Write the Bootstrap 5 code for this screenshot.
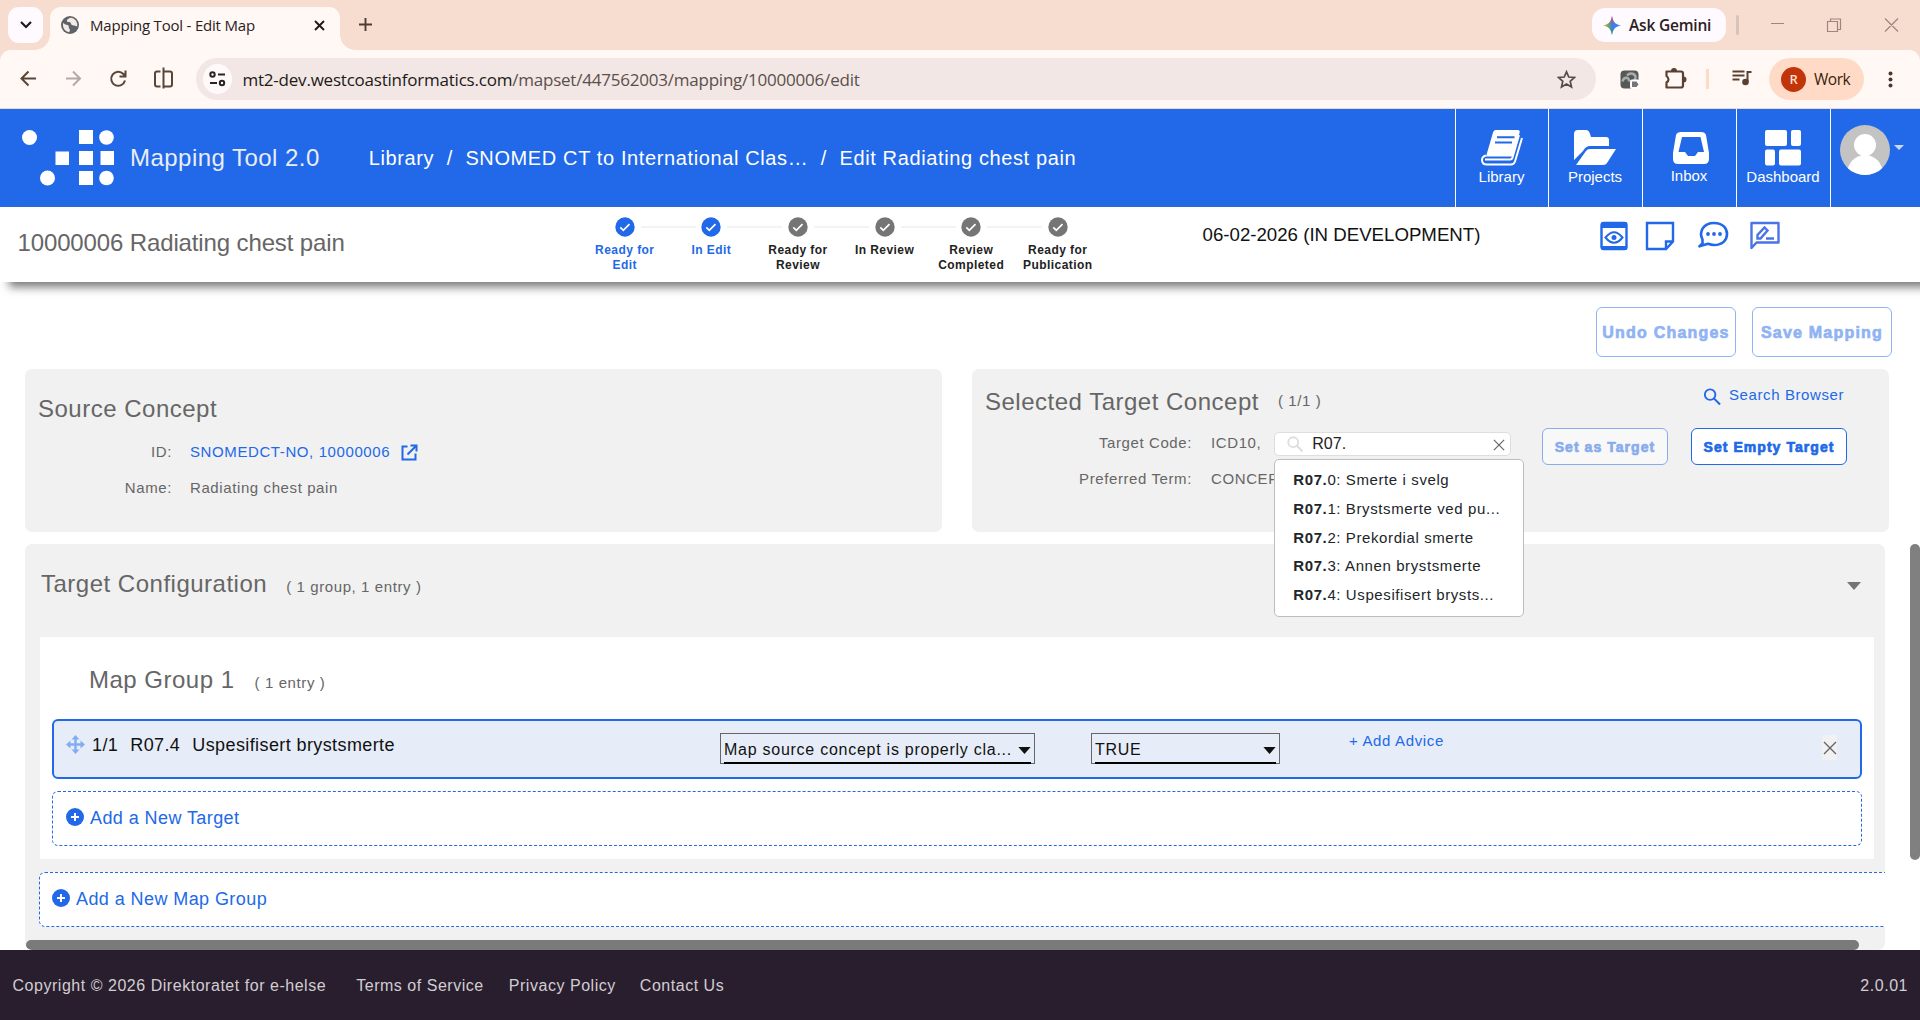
<!DOCTYPE html>
<html lang="en">
<head>
<meta charset="utf-8">
<title>Mapping Tool - Edit Map</title>
<link href="https://cdn.jsdelivr.net/npm/bootstrap@5.3.0/dist/css/bootstrap.min.css" rel="stylesheet">
<style>
:root{--mt-blue:#2169e8;--mt-grey:#666;--mt-panel:#f1f1f1}
body{width:1920px;height:1020px;overflow:hidden;background:#fff;font-family:"Liberation Sans",Arial,sans-serif;font-size:15px;letter-spacing:.6px;color:var(--mt-grey);line-height:20px}
svg{display:block;flex:none}
a{text-decoration:none}
a.mt-link,a.mt-link:not([href]){color:var(--mt-blue)}
/* browser frame */
.ui-font{font-family:"Open Sans","Noto Sans",sans-serif;letter-spacing:0;color:#2b211c}
.tabstrip{height:50px;background:#f7ddd0;padding-left:8px}
.tab-menu{width:35px;height:36px;margin-top:7px;border-radius:11px;background:#fffaff}
.browser-tab{position:relative;width:290px;height:43px;margin:7px 0 0 7px;padding:0 15px 7px 11px;border-radius:11px 11px 0 0;background:#fff8f5}
.browser-tab::before,.browser-tab::after{content:"";position:absolute;bottom:0;width:15px;height:15px}
.browser-tab::before{left:-15px;background:radial-gradient(circle at 0 0,transparent 14.5px,#fff8f5 15px)}
.browser-tab::after{right:-15px;background:radial-gradient(circle at 100% 0,transparent 14.5px,#fff8f5 15px)}
.tab-title{font-size:15px;letter-spacing:-.2px;margin-left:11px}
.new-tab{margin:18px 0 0 19px}
.gemini{width:134px;height:34px;border-radius:13px;background:#fffaff;font-size:15.5px;font-weight:600;letter-spacing:-.2px;padding-left:11px}
.win-sep{width:3px;height:20px;background:#d6c3bb;border-radius:2px;margin:15px 32px 0 10px}
.toolbar-row{height:59px;background:#fff8f5;border-bottom:1px solid #e6d9d3;border-radius:11px 11px 0 0}
.tool-wrap{background:#f7ddd0}
.address{width:1400px;height:42px;border-radius:21px;background:#f2e7e5;padding:0 20px 0 7px}
.site-info{width:29px;height:30px;border-radius:50%;background:#fffaf9}
.url{font-size:17px;letter-spacing:-.22px;color:#5b4f4b;margin:1px 0 0 10.5px}
.url b{font-weight:400;color:#211a17}
.profile{width:95px;height:42px;border-radius:21px;background:#ffdbc7;padding-left:12px;font-size:15.5px;letter-spacing:-.5px;color:#3a1d0c}
.profile-dot{width:25px;height:25px;border-radius:50%;background:#c1350a;color:#ffdfd0;font-size:13px;font-weight:600}
/* application header */
.app-head{height:98px;background:var(--mt-blue);color:#fff}
.brand-name{font-size:24px;letter-spacing:.46px;color:#e9edf5}
.crumbs{font-size:20px;letter-spacing:.62px;white-space:nowrap;gap:12.5px;margin-left:49px}
.head-item{width:94px;height:98px;border-left:1px solid #fff;color:#fff;font-size:15px;letter-spacing:0;padding:21px 1px 0 0}
.head-item:first-child{width:93px}
.head-item svg{height:36px}
.head-item span{line-height:18px;margin-top:2px}
.head-item span.inbox-text{margin-top:1px}
.user-menu{width:90px;height:98px;border-left:1px solid #fff;padding:16px 0 0 9px;color:#c9d9f7}
.user-caret{margin:20px 0 0 4px}
/* status bar */
.status-bar{position:relative;z-index:2;height:75px;background:#fff;box-shadow:9px 5px 9px #777}
.concept-title{font-size:24px;letter-spacing:-.13px;width:581.5px;padding-left:17.5px;line-height:30px;padding-top:21px}
.step{width:86.6px;font-size:12px;font-weight:700;letter-spacing:.45px;line-height:15px;color:#222;position:relative;padding-top:10px}
.step svg{margin:0 auto 6px}
.step.done{color:var(--mt-blue)}
.step+.step::before{content:"";position:absolute;top:19px;left:-27.3px;width:55px;height:2px;background:#f3f3f3}
.release{font-size:18.67px;letter-spacing:0;color:#111;margin:18px 0 0 101.5px}
.bar-tools{margin:13px 140px 0 0}
/* content */
.content-area{height:668px;padding:25px 0 0 25px}
.mt-btn{border:1px solid var(--mt-blue);border-radius:6px;background:#fff;color:var(--mt-blue);font-weight:700;-webkit-text-stroke:.7px currentColor;padding:0;line-height:20px}
.mt-btn.is-off{opacity:.5}
.btn-lg2{width:140px;height:50px;font-size:16px;letter-spacing:1.2px;white-space:nowrap;padding-top:1px}
.btn-sm2{height:37px;font-size:14px;letter-spacing:1.05px}
.panel{background:var(--mt-panel);border-radius:7px}
.concept-panel{width:917px;height:163px}
.panel-title{font-size:24px;letter-spacing:.5px;line-height:30px}
.field-label{text-align:right;flex:none;margin-right:18px}
.src-label{width:134px}
.tgt-label{width:207px;margin-right:19px}
.code-box{position:relative;width:237px;height:24px;margin:2px 0 0 13px;border:1px solid #dedede;border-radius:5px;background:#fff}
.code-box input{border:0;outline:0;background:none;width:172px;padding:0;font-size:16px;letter-spacing:0;line-height:20px;color:#222;margin:0 9px;height:20px}
.suggest{position:absolute;z-index:5;left:-1px;top:26px;width:250px;height:158px;padding:6px 0 0 18px;border:1px solid #bdbdbd;border-radius:5px;background:#fff;color:#212529;line-height:28.75px;white-space:nowrap}
.config{width:1860px;height:406px;overflow:hidden;margin-top:12px}
.config-head{padding:25px 24px 0 16px}
.group-box{margin:38px 11px 0 15px;height:222px;background:#fff;padding:28px 12px 0}
.group-head{margin-left:37px;height:54px}
.entry{height:60px;border:2px solid var(--mt-blue);border-radius:6px;background:#e7edf8;color:#111;font-size:18px;letter-spacing:.4px}
.entry-text{width:636px;margin-top:14px;gap:12px;padding-left:7px}
.pick{height:31px;border:1px solid #666;padding:1px 3px 0;font-size:16px;letter-spacing:.74px;margin-top:12px}
.pick>div{height:29px;border-bottom:2px solid #000;padding-top:2px}
.pick svg{margin-top:1px}
.advice{font-size:15px;letter-spacing:.65px;margin:10px 0 0 69px}
.dashed{height:55px;border:1px dashed var(--mt-blue);border-radius:6px;background:#fff;color:var(--mt-blue);font-size:18px;letter-spacing:.42px;gap:6px}
.hbar{width:1833px;height:10px;border-radius:5px;background:#7a7a7a;margin:13px 0 0 1px}
.vbar{position:absolute;left:1910px;top:262px;width:10px;height:316px;border-radius:5px;background:#808080}
.remove{width:15px;height:25px;background:#f1f1f1;margin:14px 23px 0 0}
.app-foot{height:70px;background:#291e2d;color:#d2cdd3;font-size:16px;letter-spacing:.53px;padding:1px 12px 0 12.5px}
</style>
</head>
<body>
<svg width="0" height="0" class="position-absolute">
<defs>
<symbol id="chk" viewBox="0 0 20 20"><circle cx="10" cy="10" r="9.700" fill="currentColor"/><path d="M5.300 10.400l3 3 6.200-6.300" fill="none" stroke="#fff" stroke-width="1.700"/></symbol>
<symbol id="plus" viewBox="0 0 18 18"><circle cx="9" cy="9" r="9" fill="currentColor"/><path d="M9 5v8M5 9h8" stroke="#fff" stroke-width="2"/></symbol>
<symbol id="times" viewBox="0 0 14 14"><path d="M1 1l12 12M13 1L1 13" stroke="currentColor" stroke-width="1.400" fill="none"/></symbol>
<symbol id="lens" viewBox="0 0 18 18"><circle cx="7" cy="7" r="5.600" fill="none" stroke="currentColor" stroke-width="2"/><path d="M11 11l6.500 6.500" stroke="currentColor" stroke-width="2.200"/></symbol>
<symbol id="caret" viewBox="0 0 14 8"><path d="M0 0h14L7 8z" fill="currentColor"/></symbol>
</defs>
</svg>

<div class="tabstrip ui-font d-flex align-items-start">
  <div class="tab-menu d-flex align-items-center justify-content-center"><svg width="14" height="10"><path d="M2 2l5 5 5-5" fill="none" stroke="#1d1b1a" stroke-width="2.200"/></svg></div>
  <div class="browser-tab d-flex align-items-center">
    <svg width="18" height="18" viewBox="0 0 18 18"><circle cx="9" cy="9" r="9" fill="#5f6368"/><path d="M2 7q2.500 2 4.500 2 1.800.3 1.300 2-.6 1.200.8 1.800.8 2-.4 3.400C4 15.500 1.500 12 2 7zM9.500 1.800q-3.500 1-3.700 2.700 0 1.500 1.800 1.500 2-.3 2.200 1.200 0 1.600 1.800 2 2.800.2 4.600 1.300c.8-3.700-1.700-8.300-6.700-8.700z" fill="#f3ebe8"/></svg>
    <span class="tab-title">Mapping Tool - Edit Map</span>
    <svg class="ms-auto" width="11" height="11"><path d="M1 1l9 9M10 1l-9 9" stroke="#1d1b1a" stroke-width="1.900"/></svg>
  </div>
  <svg class="new-tab" width="13" height="13"><path d="M6.500 0v13M0 6.500h13" stroke="#4d3c33" stroke-width="1.900"/></svg>
  <div class="gemini ms-auto mt-2 d-flex align-items-center gap-2"><svg width="18" height="19" viewBox="0 0 18 19"><defs><linearGradient id="gem"><stop offset="0" stop-color="#f4b72c"/><stop offset=".3" stop-color="#7ca45b"/><stop offset=".5" stop-color="#3b7de9"/><stop offset="1" stop-color="#4387f7"/></linearGradient><linearGradient id="gem2" x2="0" y2="1"><stop offset="0" stop-color="#f04438"/><stop offset=".45" stop-color="#f04438" stop-opacity="0"/><stop offset=".6" stop-color="#20a558" stop-opacity="0"/><stop offset="1" stop-color="#20a558"/></linearGradient></defs><path d="M9 0c1 5.500 3 8.500 9 9.500-6 1-8 4-9 9.500-1-5.500-3-8.500-9-9.500 6-1 8-4 9-9.500z" fill="url(#gem)"/><path d="M9 0c1 5.500 3 8.500 9 9.500-6 1-8 4-9 9.500-1-5.500-3-8.500-9-9.500 6-1 8-4 9-9.500z" fill="url(#gem2)"/></svg><span>Ask Gemini</span></div>
  <div class="win-sep"></div>
  <svg class="mt-3" width="149" height="16"><g transform="translate(0 2)" fill="none" stroke="#9b877e" stroke-width="1.200"><path d="M0 5.500h13M56.500 3.500h10v10h-10zM59.500 3V1h10v10.500h-2.500M114 .5l13 13M127 .5l-13 13"/></g></svg>
</div>

<div class="tool-wrap"><div class="toolbar-row ui-font d-flex align-items-center">
  <svg width="196" height="58" fill="none" stroke="#5a4636" stroke-width="2">
    <path d="M36 28.500H22M28.500 21.500l-7 7 7 7"/>
    <path d="M66 28.500h14M73 21.500l7 7-7 7" stroke="#b5a9a3"/>
    <path d="M125 30.500a7 7 0 1 1-1.600-6.500l1.600 1.700M125.500 20.500v6h-6"/>
    <path d="M160.500 21.500h-3.500a2 2 0 0 0-2 2v11a2 2 0 0 0 2 2h3.500M163.500 17.500v21M163.500 21.500h6.500a2 2 0 0 1 2 2v11a2 2 0 0 1-2 2h-6.500"/>
  </svg>
  <div class="address d-flex align-items-center">
    <div class="site-info d-flex align-items-center justify-content-center"><svg width="17" height="16" fill="none" stroke="#2b2320" stroke-width="2"><circle cx="3.500" cy="3.500" r="2.200"/><path d="M9 3.500h7M1 12h7"/><circle cx="13" cy="12" r="2.200"/></svg></div>
    <span class="url"><b>mt2-dev.westcoastinformatics.com</b>/mapset/447562003/mapping/10000006/edit</span>
    <svg class="ms-auto" width="19" height="19" viewBox="0 0 19 19"><path d="M9.500 1.800l2.300 5.200 5.700.5-4.300 3.800 1.300 5.600-5-3-5 3 1.300-5.600L1.500 7.500 7.200 7z" fill="none" stroke="#5a4a44" stroke-width="1.700"/></svg>
  </div>
  <svg width="173" height="58">
    <rect x="24.500" y="20.500" width="18" height="18" rx="4" fill="#555958"/><path d="M26.500 31.500c1-5 7-5 6.500 0M31 25.500c3-3.500 9-2 8.500 2.500-.5 3-3 4-5 3" fill="none" stroke="#a9acaa" stroke-width="2.500"/><rect x="34" y="29.500" width="10" height="9.500" rx="2" fill="#fff"/><path d="M36 31.500h4.500l2 3-2 2.500H36z" fill="#777"/>
    <path d="M70.500 21.500h14.500q2 0 2 2v12q0 2-2 2H70.500v-5q4-3 0-6.500z" fill="none" stroke="#5a4030" stroke-width="2.200" stroke-linejoin="round"/><path d="M75 21a3 3 0 0 1 6 0zM87.500 26.500a3 3 0 0 1 0 6z" fill="#5a4030"/>
    <rect x="110" y="19" width="3" height="20" fill="#ffdac5"/>
    <path d="M136.500 21.500h12M136.500 25.500h12M136.500 29.500h7M151.500 32V22h4" stroke="#5a4030" stroke-width="2" fill="none"/><circle cx="149.500" cy="32" r="3.300" fill="#5a4030"/>
  </svg>
  <div class="profile d-flex align-items-center"><span class="profile-dot d-flex align-items-center justify-content-center me-2">R</span>Work</div>
  <svg class="ms-4" width="5" height="17" fill="#4a382e"><circle cx="2.500" cy="2.500" r="2"/><circle cx="2.500" cy="8.500" r="2"/><circle cx="2.500" cy="14.500" r="2"/></svg>
</div></div>

<header class="app-head d-flex align-items-center">
  <svg width="130" height="98" fill="#fff"><circle cx="29.500" cy="28.500" r="7.500"/><rect x="79" y="21" width="14" height="14"/><circle cx="106.500" cy="28.500" r="7.300"/><rect x="55.500" y="42.500" width="13.500" height="13.500"/><rect x="79" y="42" width="14" height="14"/><rect x="100.500" y="42" width="13.500" height="14"/><circle cx="47.500" cy="69" r="7.500"/><rect x="79" y="62" width="14" height="14"/><circle cx="106.500" cy="69" r="7.300"/></svg>
  <span class="brand-name">Mapping Tool 2.0</span>
  <nav class="crumbs d-flex"><span>Library</span><span>/</span><span>SNOMED CT to International Clas…</span><span>/</span><span>Edit Radiating chest pain</span></nav>
  <nav class="d-flex ms-auto">
    <a class="head-item d-flex flex-column align-items-center"><svg width="42" viewBox="0 0 42 36" fill="none"><path d="M14.500 0h22q3 0 2 3l-7 23.500H5L12 2.500Q12.700 0 14.500 0z" fill="#fff"/><path d="M16 7.200h17.500M14 12.600h17" stroke="var(--mt-blue)" stroke-width="2"/><path d="M5 25.500q-4 1-4 4.500 0 4.500 5 4.500h24q3 0 4-3L41 8M4 29.500h25q2 0 2.500-2L38 5" stroke="#fff" stroke-width="2"/></svg><span>Library</span></a>
    <a class="head-item d-flex flex-column align-items-center"><svg width="42" viewBox="0 0 42 36" fill="#fff"><path d="M0 4q0-4 4-4h8q3 0 4 4l1 3h15q3 0 3 3v6H16q-4 0-7 5L0 30z"/><path d="M12 21q1-2 4-2h26L33 33q-1 2-4 2H2z"/></svg><span>Projects</span></a>
    <a class="head-item d-flex flex-column align-items-center"><svg class="ms-1" width="38" viewBox="0 0 38 36"><path d="M9 2h20q4 0 5 3l3 18v6q0 5-5 5H6q-5 0-5-5v-6L4 5q1-3 5-3zm1 5L6.500 22H13l3 4h7l3-4h6L28.500 7z" fill="#fff" fill-rule="evenodd"/></svg><span class="inbox-text">Inbox</span></a>
    <a class="head-item d-flex flex-column align-items-center"><svg width="36" viewBox="0 0 36 36" fill="#fff"><rect y="0" width="22" height="16" rx="2"/><rect x="26" width="10" height="16" rx="2"/><rect y="19.500" width="10" height="16" rx="2"/><rect x="14" y="19.500" width="22" height="16" rx="2"/></svg><span>Dashboard</span></a>
    <a class="user-menu d-flex"><svg width="50" height="50"><defs><clipPath id="av"><circle cx="25" cy="25" r="25"/></clipPath></defs><g clip-path="url(#av)"><rect width="50" height="50" fill="#c3c3c3"/><g fill="#fff"><circle cx="25" cy="20" r="11"/><ellipse cx="25" cy="49" rx="18" ry="19"/></g></g></svg><svg class="user-caret" width="10" height="5" viewBox="0 0 10 5"><path d="M0 0h10L5 5z" fill="#c9d9f7"/></svg></a>
  </nav>
</header>

<section class="status-bar d-flex align-items-start">
  <div class="concept-title">10000006 Radiating chest pain</div>
  <div class="d-flex text-center">
    <div class="step done"><svg width="20" height="20"><use href="#chk"/></svg>Ready for<br>Edit</div>
    <div class="step done"><svg width="20" height="20"><use href="#chk"/></svg>In Edit</div>
    <div class="step"><svg width="20" height="20" color="#757575"><use href="#chk"/></svg>Ready for<br>Review</div>
    <div class="step"><svg width="20" height="20" color="#757575"><use href="#chk"/></svg>In Review</div>
    <div class="step"><svg width="20" height="20" color="#757575"><use href="#chk"/></svg>Review<br>Completed</div>
    <div class="step"><svg width="20" height="20" color="#757575"><use href="#chk"/></svg>Ready for<br>Publication</div>
  </div>
  <div class="release">06-02-2026 (IN DEVELOPMENT)</div>
  <svg class="bar-tools ms-auto" width="181" height="31" fill="none" stroke="#2169e8" stroke-width="2.400">
    <rect x="2.500" y="3" width="25" height="26" rx="2"/><path d="M2 2.500h26V8H2zM2 26h26v3.500H2z" fill="#2169e8" stroke="none"/><path d="M6.500 17.500q8.500-10.500 17 0-8.500 10.500-17 0z" stroke-width="2"/><circle cx="15" cy="17.500" r="2.500" fill="#2169e8" stroke="none"/>
    <path d="M48 3h26v18.500l-7 7.500h-19zM67 29v-7.500h7"/>
    <path d="M103.500 23.500v-4c-4-8 1-16.500 11.500-16.500 9 0 13 5.500 13 11s-4 11-13 11c-2 0-4-.5-6-1.200l-8.500 2.500z" stroke-width="2.600" stroke-linejoin="round"/><g fill="#2169e8" stroke="none"><circle cx="109" cy="14" r="1.900"/><circle cx="115" cy="14" r="1.900"/><circle cx="121" cy="14" r="1.900"/></g>
    <g stroke="#4a73e8"><path d="M152.500 28V3h27v19.500h-22z" stroke-linejoin="round"/><path d="M158.500 18.500v-3.500l7-7.500 3 3-7 8zM167 18.500h8"/></g>
  </svg>
</section>

<main class="content-area position-relative">
  <div class="vbar"></div>
  <div class="d-flex justify-content-end gap-3" style="margin-right:28px">
    <button class="mt-btn btn-lg2 is-off">Undo Changes</button>
    <button class="mt-btn btn-lg2 is-off">Save Mapping</button>
  </div>
  <div class="d-flex" style="margin-top:12px;gap:30px">
    <section class="panel concept-panel" style="padding:25px 13px 0">
      <div class="panel-title">Source Concept</div>
      <div class="d-flex align-items-center" style="margin-top:18px"><span class="field-label src-label">ID:</span><a class="mt-link">SNOMEDCT-NO, 10000006</a>
        <svg style="margin-left:11px" width="17" height="17" fill="none" stroke="#2169e8" stroke-width="2"><path d="M6.500 2.500H1.500v13h13v-6M9.500 1.500h6v6M15.500 1.500L6.500 10.500"/></svg></div>
      <div class="d-flex" style="margin-top:16px"><span class="field-label src-label">Name:</span><span>Radiating chest pain</span></div>
    </section>
    <section class="panel concept-panel d-flex">
      <div style="width:570px;padding:18px 0 0 13px">
        <div class="d-flex"><span class="panel-title">Selected Target Concept</span><span style="margin:4px 0 0 19px">( 1/1 )</span></div>
        <div class="d-flex align-items-center" style="margin-top:14px;height:24px"><span class="field-label tgt-label">Target Code:</span><span>ICD10,</span>
          <div class="code-box d-flex align-items-center"><svg class="ms-2 ps-1" color="#ddd" width="20" height="16"><use href="#lens"/></svg><input value="R07."><svg style="margin-top:2px" color="#666" width="12" height="12"><use href="#times"/></svg>
            <div class="suggest"><div><b>R07.</b>0: Smerte i svelg</div><div><b>R07.</b>1: Brystsmerte ved pu...</div><div><b>R07.</b>2: Prekordial smerte</div><div><b>R07.</b>3: Annen brystsmerte</div><div><b>R07.</b>4: Uspesifisert brysts...</div></div>
          </div></div>
        <div class="d-flex" style="margin-top:14px"><span class="field-label tgt-label">Preferred Term:</span><span>CONCEPT</span></div>
      </div>
      <div style="padding-top:15px">
        <a class="mt-link d-flex align-items-center" style="margin-left:161px"><svg class="mt-1 me-2" width="18" height="17"><use href="#lens"/></svg>Search Browser</a>
        <div class="d-flex" style="margin-top:23px;gap:23px"><button class="mt-btn btn-sm2 is-off" style="width:126px">Set as Target</button><button class="mt-btn btn-sm2" style="width:156px">Set Empty Target</button></div>
      </div>
    </section>
  </div>
  <section class="panel config">
    <div class="config-head d-flex align-items-baseline"><span class="panel-title">Target Configuration</span><span style="margin-left:19px">( 1 group, 1 entry )</span><svg class="ms-auto align-self-center mt-1" color="#757575" width="14" height="8"><use href="#caret"/></svg></div>
    <div class="group-box">
      <div class="group-head d-flex align-items-baseline"><span class="panel-title">Map Group 1</span><span style="margin-left:20px">( 1 entry )</span></div>
      <div class="entry d-flex align-items-start">
        <svg style="margin:14px 0 0 12px" width="19" height="19"><path d="M9.500 2v15M2 9.500h15" stroke="#84acf3" stroke-width="2.400"/><path d="M9.500 0l4 4.500h-8zM9.500 19l4-4.500h-8zM0 9.500l4.500-4v8zM19 9.500l-4.500-4v8z" fill="#84acf3"/></svg>
        <div class="entry-text d-flex"><span>1/1</span><span>R07.4</span><span>Uspesifisert brystsmerte</span></div>
        <div class="pick" style="width:315px;margin-left:-1px"><div class="d-flex align-items-center"><span>Map source concept is properly cla...</span><svg class="ms-auto" width="13" height="7"><use href="#caret"/></svg></div></div>
        <div class="pick" style="width:189px;margin-left:56px"><div class="d-flex align-items-center"><span>TRUE</span><svg class="ms-auto" width="13" height="7"><use href="#caret"/></svg></div></div>
        <a class="mt-link advice">+ Add Advice</a>
        <div class="remove d-flex align-items-center justify-content-center ms-auto"><svg color="#666" width="14" height="14"><use href="#times"/></svg></div>
      </div>
      <div class="dashed d-flex align-items-start" style="margin-top:12px;padding:16px 0 0 13px"><svg width="18" height="18"><use href="#plus"/></svg><span>Add a New Target</span></div>
    </div>
    <div class="dashed d-flex align-items-start" style="width:1860px;margin:13px 0 0 14px;padding:16px 0 0 12px"><svg width="18" height="18"><use href="#plus"/></svg><span>Add a New Map Group</span></div>
    <div class="hbar"></div>
  </section>
</main>

<footer class="app-foot d-flex align-items-center">
  <span>Copyright © 2026 Direktoratet for e-helse</span><a style="margin-left:30px">Terms of Service</a><a style="margin-left:25px">Privacy Policy</a><a style="margin-left:24px">Contact Us</a><span class="ms-auto">2.0.01</span>
</footer>
<script src="https://cdn.jsdelivr.net/npm/bootstrap@5.3.0/dist/js/bootstrap.bundle.min.js"></script>
</body>
</html>
